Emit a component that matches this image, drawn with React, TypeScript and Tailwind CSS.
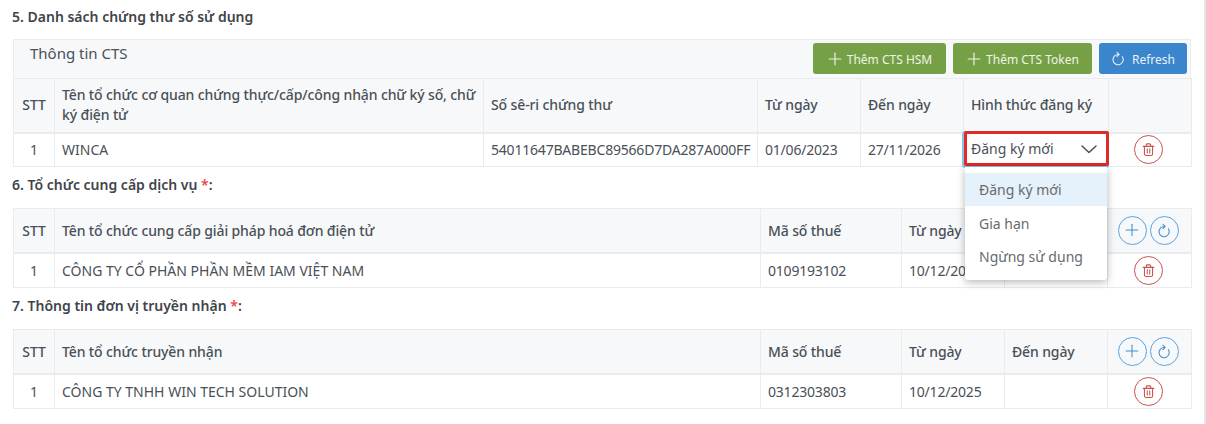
import React from "react";
import { Plus } from "lucide-react";

// icon reload: cung tròn hở phía trên bên phải, mũi tên ở đỉnh
function ReloadIcon({ size, stroke = 1.7 }: { size: number; stroke?: number }) {
  return (
    <svg width={size} height={size} viewBox="0 0 24 24" fill="none" stroke="currentColor" strokeWidth={stroke} strokeLinecap="round" strokeLinejoin="round">
      <path d="M18.2 9.2A8.2 8.2 0 1 1 12.2 5.6" />
      <path d="M9.6 2L13 5.5L9.6 8.8" />
    </svg>
  );
}

function TrashIcon() {
  return (
    <svg width={15} height={15} viewBox="0 0 24 24" fill="none" stroke="currentColor" strokeWidth={1.7} strokeLinecap="round" strokeLinejoin="round">
      <path d="M3.5 7H20.5" />
      <path d="M8.5 7V4.5A1.5 1.5 0 0 1 10 3H14A1.5 1.5 0 0 1 15.5 4.5V7" />
      <path d="M5.5 7V19A2.5 2.5 0 0 0 8 21.5H16A2.5 2.5 0 0 0 18.5 19V7" />
      <path d="M10 11V17.5" />
      <path d="M14 11V17.5" />
    </svg>
  );
}

// nút tròn ở cột thao tác
function RoundButton({ kind }: { kind: "add" | "refresh" | "delete" }) {
  const color = kind === "delete" ? "border-[#c9524f] text-[#c9524f]" : "border-[#5ba3df] text-[#3d8fd1]";
  return (
    <button className={`w-[29px] h-[29px] rounded-full border flex items-center justify-center ${color}`}>
      {kind === "add" && <Plus size={20} strokeWidth={1.25} />}
      {kind === "refresh" && <ReloadIcon size={15} />}
      {kind === "delete" && <TrashIcon />}
    </button>
  );
}

function Th({ children, center, lower }: { children?: React.ReactNode; center?: boolean; lower?: boolean }) {
  return (
    <th className={`border border-[#e9ecef] border-b-2 bg-[#f7f8fa] px-[7px] ${lower ? "pt-[2px] pb-0" : "py-0"} font-medium text-[14px] leading-[20px] tracking-[-0.12px] text-[#495057] ${center ? "text-center" : "text-left"}`}>
      {children}
    </th>
  );
}

function Td({ children, center, digits }: { children?: React.ReactNode; center?: boolean; digits?: boolean }) {
  return (
    <td className={`border border-[#e9ecef] px-[7px] py-0 text-[14px] text-[#495057] whitespace-nowrap ${digits ? "tracking-[-0.2px]" : ""} ${center ? "text-center" : "text-left"}`}>
      {children}
    </td>
  );
}

function Title({ text, required }: { text: string; required?: boolean }) {
  return (
    <div className="-ml-[1px] text-[14px] leading-[20px] font-semibold text-[#3f444a]">
      {text}
      {required && <span className="text-[#ef4444]"> *</span>}
      {required && ":"}
    </div>
  );
}

function GreenButton({ label, width }: { label: string; width: string }) {
  return (
    <button className={`h-[31px] ${width} rounded-[3px] bg-[#76a046] text-[#eef4e6] text-[12px] flex items-center justify-center gap-[2px] pr-[2px]`}>
      <Plus size={20} strokeWidth={1.4} />
      <span className="pt-[2px]">{label}</span>
    </button>
  );
}

function ProviderTable({ nameHeader, name, taxCode, date }: { nameHeader: string; name: string; taxCode: string; date: string }) {
  return (
    <table className="table-fixed border-collapse w-[1178px]">
      <colgroup>
        <col className="w-[41px]" />
        <col className="w-[706px]" />
        <col className="w-[141px]" />
        <col className="w-[103px]" />
        <col className="w-[103px]" />
        <col className="w-[84px]" />
      </colgroup>
      <thead>
        <tr className="h-[44px]">
          <Th center lower>STT</Th>
          <Th lower>{nameHeader}</Th>
          <Th lower>Mã số thuế</Th>
          <Th lower>Từ ngày</Th>
          <Th lower>Đến ngày</Th>
          <Th>
            <div className="flex justify-center gap-[3px] pr-[3px]">
              <RoundButton kind="add" />
              <RoundButton kind="refresh" />
            </div>
          </Th>
        </tr>
      </thead>
      <tbody>
        <tr className="h-[35px]">
          <Td center>1</Td>
          <Td>{name}</Td>
          <Td digits>{taxCode}</Td>
          <Td digits>{date}</Td>
          <Td></Td>
          <Td>
            <div className="flex justify-center pr-[3px]">
              <RoundButton kind="delete" />
            </div>
          </Td>
        </tr>
      </tbody>
    </table>
  );
}

export default function App() {
  return (
    <div className="relative w-[1206px] h-[424px] overflow-hidden bg-white border-r-2 border-[#e5e5e5] pl-[13px] pt-[7px] font-['Noto_Sans',sans-serif]">
      <Title text="5. Danh sách chứng thư số sử dụng" />

      {/* bảng chứng thư số */}
      <div className="mt-[12px] w-[1178px]">
        <div className="h-[39px] bg-[#f7f8fa] border border-b-0 border-[#e9ecef] flex items-start justify-between pr-[3px]">
          <div className="pl-[16px] pt-[2px] text-[15px] leading-[22px] text-[#495057]">Thông tin CTS</div>
          <div className="flex gap-[7px] pt-[3px]">
            <GreenButton label="Thêm CTS HSM" width="w-[133px]" />
            <GreenButton label="Thêm CTS Token" width="w-[139px]" />
            <button className="h-[31px] w-[88px] rounded-[3px] bg-[#3a85cb] text-[#e8f2fb] text-[12px] flex items-center justify-center gap-[6px]">
              <ReloadIcon size={15} />
              <span className="pt-[2px]">Refresh</span>
            </button>
          </div>
        </div>
        <table className="table-fixed border-collapse w-[1178px]">
          <colgroup>
            <col className="w-[41px]" />
            <col className="w-[429px]" />
            <col className="w-[274px]" />
            <col className="w-[103px]" />
            <col className="w-[103px]" />
            <col className="w-[145px]" />
            <col className="w-[83px]" />
          </colgroup>
          <thead>
            <tr className="h-[54px]">
              <Th center>STT</Th>
              <Th>Tên tổ chức cơ quan chứng thực/cấp/công nhận chữ ký số, chữ ký điện tử</Th>
              <Th>Số sê-ri chứng thư</Th>
              <Th>Từ ngày</Th>
              <Th>Đến ngày</Th>
              <Th>Hình thức đăng ký</Th>
              <Th />
            </tr>
          </thead>
          <tbody>
            <tr className="h-[34px]">
              <Td center>1</Td>
              <Td>WINCA</Td>
              <Td digits>54011647BABEBC89566D7DA287A000FF</Td>
              <Td digits>01/06/2023</Td>
              <Td digits>27/11/2026</Td>
              <Td></Td>
              <Td>
                <div className="flex justify-center pr-[3px]">
                  <RoundButton kind="delete" />
                </div>
              </Td>
            </tr>
          </tbody>
        </table>
      </div>

      <div className="mt-[8px]">
        <Title text="6. Tổ chức cung cấp dịch vụ" required />
      </div>
      <div className="mt-[13px]">
        <ProviderTable
          nameHeader="Tên tổ chức cung cấp giải pháp hoá đơn điện tử"
          name="CÔNG TY CỔ PHẦN PHẦN MỀM IAM VIỆT NAM"
          taxCode="0109193102"
          date="10/12/2025"
        />
      </div>

      <div className="mt-[8px]">
        <Title text="7. Thông tin đơn vị truyền nhận" required />
      </div>
      <div className="mt-[13px]">
        <ProviderTable
          nameHeader="Tên tổ chức truyền nhận"
          name="CÔNG TY TNHH WIN TECH SOLUTION"
          taxCode="0312303803"
          date="10/12/2025"
        />
      </div>

      {/* select đang mở, nằm đè lên bảng */}
      <div className="absolute left-[964px] top-[131px] w-[145px] h-[35px] border-[3px] border-[#e02b27] rounded-[2px] bg-white shadow-[-1px_1px_0_1px_#8fc0ea] flex items-center justify-between pl-[4px] pr-[8px] text-[14px] text-[#495057]">
        Đăng ký mới
        <svg width={18} height={10} viewBox="0 0 18 10" fill="none" stroke="currentColor" strokeWidth={1.5} strokeLinecap="round" strokeLinejoin="round">
          <path d="M2 2L9 8.5L16 2" />
        </svg>
      </div>
      <div className="absolute left-[965px] top-[167px] w-[142px] h-[113px] bg-white rounded-b-[3px] shadow-[0_2px_8px_rgba(0,0,0,0.3)] pt-[6px] text-[14px] text-[#666b70]">
        <div className="h-[33px] bg-[#e6f2fb] pl-[14px] flex items-center">Đăng ký mới</div>
        <div className="h-[34px] pl-[14px] flex items-center">Gia hạn</div>
        <div className="h-[33px] pl-[14px] flex items-center">Ngừng sử dụng</div>
      </div>
    </div>
  );
}
